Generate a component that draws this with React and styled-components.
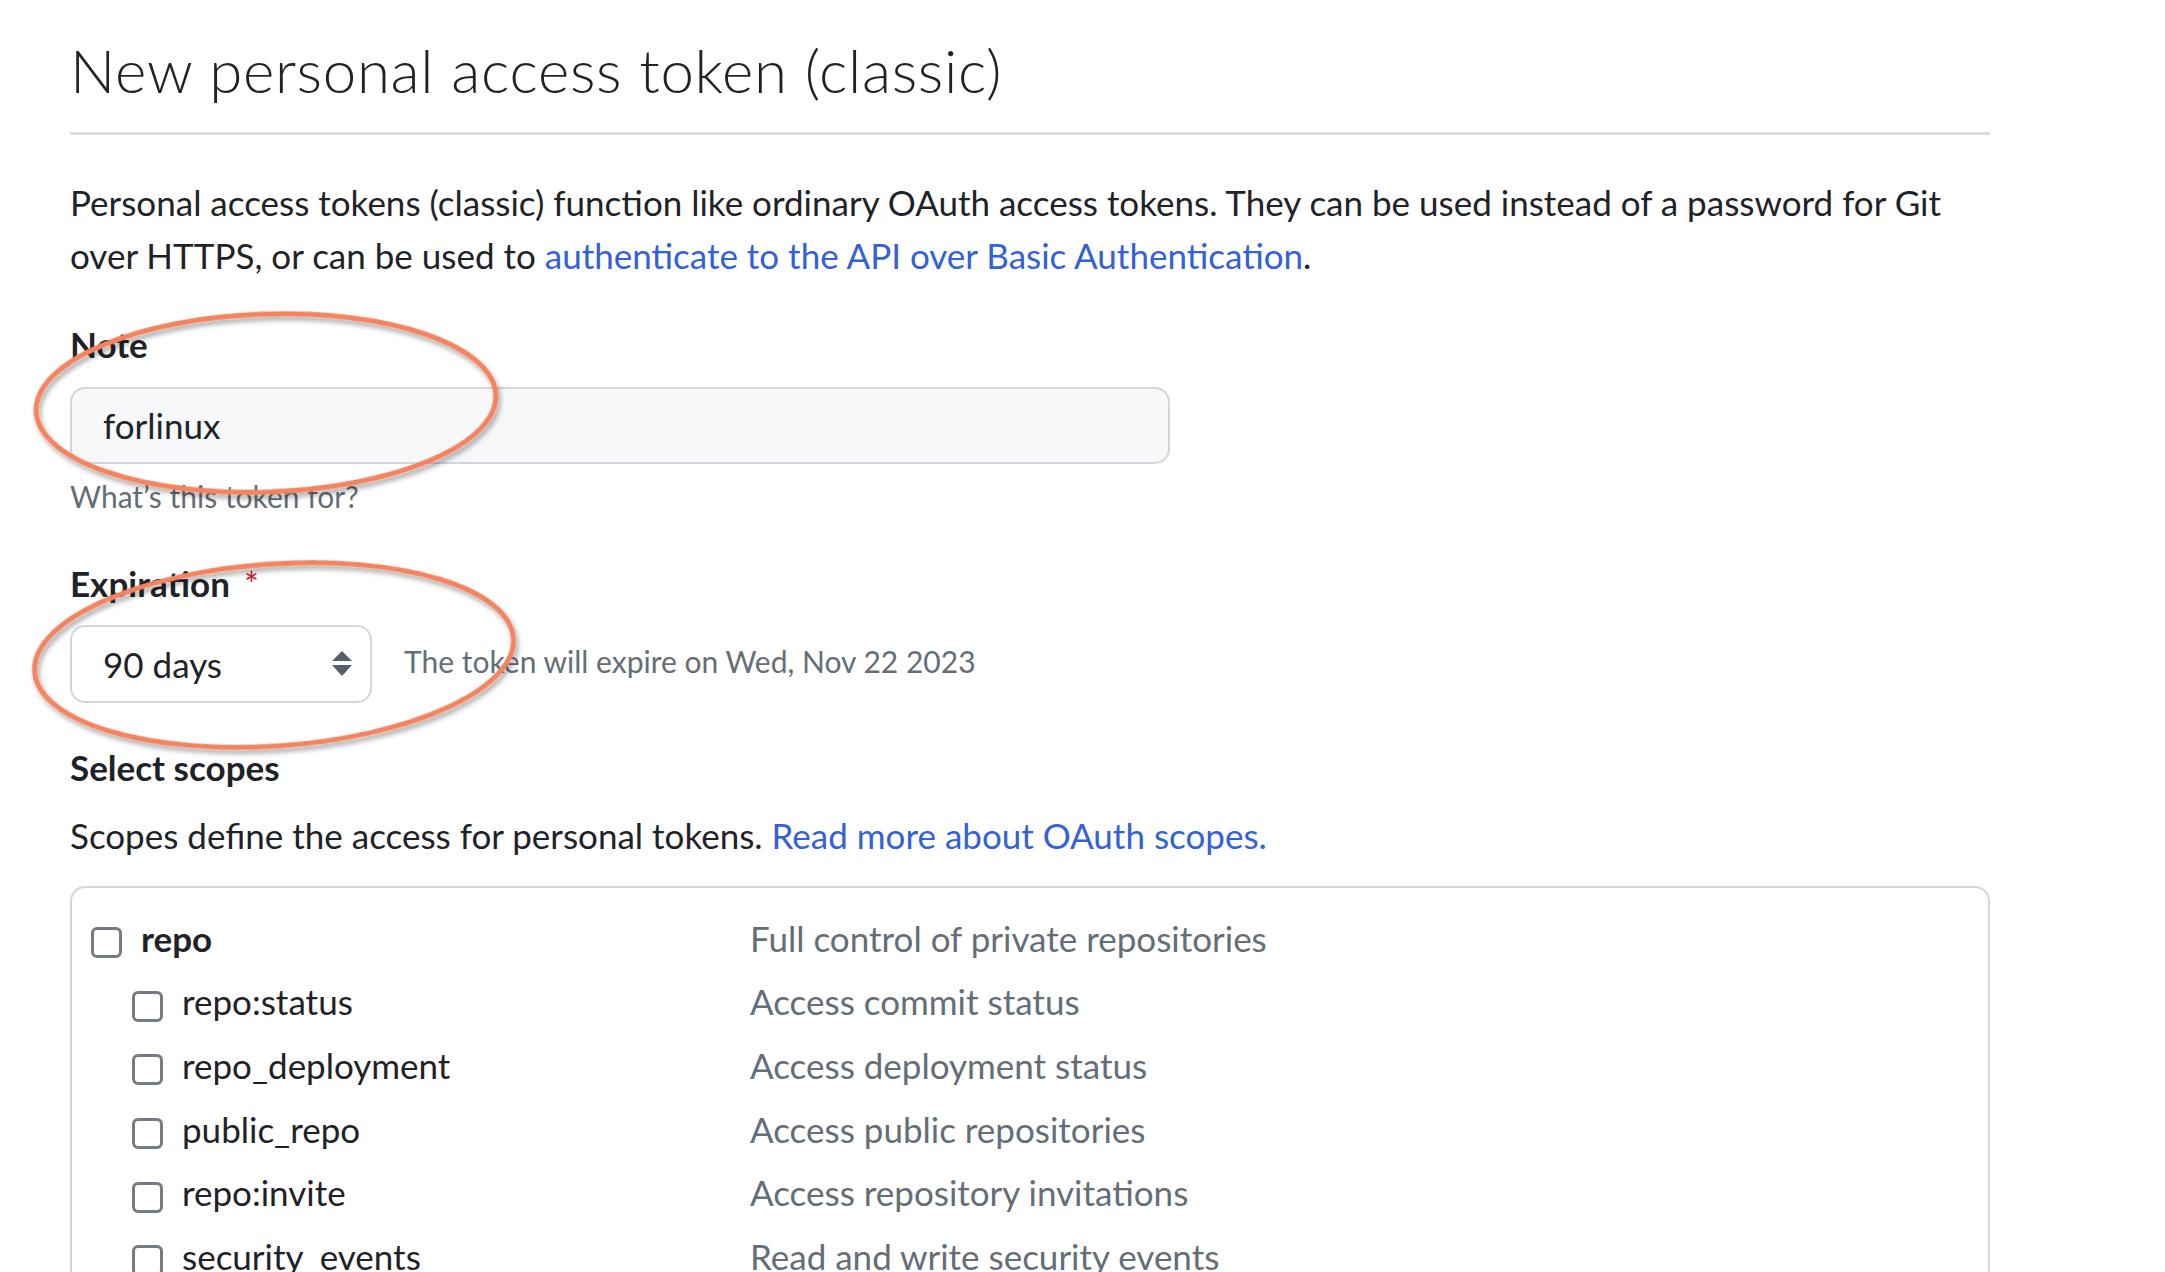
import React from 'react';
import styled, { createGlobalStyle } from 'styled-components';

const GlobalStyle = createGlobalStyle`
    html, body {
        margin: 0;
        padding: 0;
        background: #ffffff;
    }
    body {
        font-family: Lato, "Noto Sans", "Liberation Sans", sans-serif;
        color: #1f2328;
    }
`;

const Page = styled.div`
    position: relative;
    width: 2165px;
    height: 1272px;
    overflow: hidden;
`;

const Container = styled.div`
    width: 1920px;
    padding-left: 70px;
`;

const Subhead = styled.div`
    padding-top: 25px;
    padding-bottom: 17px;
    border-bottom: 3px solid #d8dee4;
`;

const Title = styled.h1`
    margin: 0;
    font-size: 60px;
    line-height: 90px;
    font-weight: 300;
    letter-spacing: 0.7px;
`;

const Text = styled.p`
    margin: ${p => p.$mt || 0}px 0 0 0;
    font-size: ${p => p.$size || 35}px;
    line-height: 1.5;
    color: ${p => (p.$muted ? '#656d76' : '#1f2328')};
`;

const Link = styled.a`
    color: #3361d8;
    text-decoration: none;
`;

const Label = styled.div`
    margin-top: ${p => p.$mt}px;
    font-size: 35px;
    line-height: 52.5px;
    font-weight: 700;
    display: flex;
    align-items: center;
    gap: 14px;
`;

const Required = styled.span`
    color: #cf222e;
    font-weight: 400;
`;

const TextInput = styled.div`
    box-sizing: border-box;
    margin-top: 16px;
    width: 1100px;
    height: 77px;
    padding-left: 31px;
    display: flex;
    align-items: center;
    font-size: 35px;
    background: #f6f8fa;
    border: 2.5px solid #d0d7de;
    border-radius: 15px;
`;

const ExpiryRow = styled.div`
    margin-top: 16px;
    display: flex;
    align-items: center;
    gap: 32px;
`;

const Select = styled.div`
    box-sizing: border-box;
    width: 302px;
    height: 78px;
    padding: 0 18px 0 31px;
    display: flex;
    align-items: center;
    justify-content: space-between;
    font-size: 35px;
    background: #ffffff;
    border: 2.5px solid #d0d7de;
    border-radius: 15px;
`;

const Note = styled.span`
    font-size: 30px;
    color: #656d76;
    margin-top: -6px;
`;

const ScopeCard = styled.div`
    margin-top: 25px;
    padding-top: 18px;
    border: 2.5px solid #d0d7de;
    border-bottom: none;
    border-radius: 15px 15px 0 0;
    height: 600px;
`;

const ScopeRow = styled.div`
    display: grid;
    grid-template-columns: 678px 1fr;
    align-items: center;
    height: 63.6px;
    font-size: 35px;
`;

const ScopeName = styled.label`
    display: flex;
    align-items: center;
    gap: 19px;
    padding-left: ${p => (p.$child ? 60 : 19)}px;
    font-weight: ${p => (p.$child ? 400 : 700)};
`;

const Checkbox = styled.span`
    box-sizing: border-box;
    flex: none;
    width: 31px;
    height: 31px;
    margin-top: 10px;
    border: 3px solid #757b82;
    border-radius: 6px;
    background: #ffffff;
`;

const ScopeDesc = styled.span`
    color: #656d76;
`;

const Annotations = styled.svg`
    position: absolute;
    left: 0;
    top: 0;
    pointer-events: none;
`;

const SelectArrows = () => (
    <svg width="20" height="26" viewBox="0 0 20 26">
        <path d="M10 0 L20 10 L0 10 Z" fill="#57606a" />
        <path d="M0 14 L20 14 L10 25 Z" fill="#57606a" />
    </svg>
);

const scopes = [
    { name: 'repo', desc: 'Full control of private repositories' },
    { name: 'repo:status', desc: 'Access commit status', child: true },
    { name: 'repo_deployment', desc: 'Access deployment status', child: true },
    { name: 'public_repo', desc: 'Access public repositories', child: true },
    { name: 'repo:invite', desc: 'Access repository invitations', child: true },
    { name: 'security_events', desc: 'Read and write security events', child: true },
];

const App = () => {
    return (
        <Page>
            <GlobalStyle />
            <Container>
                <Subhead>
                    <Title>New personal access token (classic)</Title>
                </Subhead>
                <Text $mt={41}>
                    Personal access tokens (classic) function like ordinary OAuth access tokens. They can be used instead of a password for Git
                    over HTTPS, or can be used to <Link href="#">authenticate to the API over Basic Authentication</Link>.
                </Text>

                <Label $mt={37}>Note</Label>
                <TextInput>forlinux</TextInput>
                <Text $size={30} $mt={10} $muted>What’s this token for?</Text>

                <Label $mt={38}>
                    Expiration <Required>*</Required>
                </Label>
                <ExpiryRow>
                    <Select>
                        90 days
                        <SelectArrows />
                    </Select>
                    <Note>The token will expire on Wed, Nov 22 2023</Note>
                </ExpiryRow>

                <Label $mt={38}>Select scopes</Label>
                <Text $mt={15}>
                    Scopes define the access for personal tokens. <Link href="#">Read more about OAuth scopes.</Link>
                </Text>

                <ScopeCard>
                    {scopes.map(s => (
                        <ScopeRow key={s.name}>
                            <ScopeName $child={s.child}>
                                <Checkbox />
                                {s.name}
                            </ScopeName>
                            <ScopeDesc>{s.desc}</ScopeDesc>
                        </ScopeRow>
                    ))}
                </ScopeCard>
            </Container>

            <Annotations width="2165" height="1272" viewBox="0 0 2165 1272">
                <defs>
                    <filter id="shade" x="-20%" y="-20%" width="140%" height="140%">
                        <feDropShadow dx="2" dy="4" stdDeviation="2.5" floodColor="#000" floodOpacity="0.35" />
                    </filter>
                </defs>
                <ellipse cx="266" cy="403" rx="230" ry="89" fill="none" stroke="#f4845f" strokeWidth="5"
                    transform="rotate(-2 266 403)" filter="url(#shade)" />
                <ellipse cx="274" cy="655" rx="240" ry="91" fill="none" stroke="#f4845f" strokeWidth="5"
                    transform="rotate(-4 274 655)" filter="url(#shade)" />
            </Annotations>
        </Page>
    );
};

export default App;
